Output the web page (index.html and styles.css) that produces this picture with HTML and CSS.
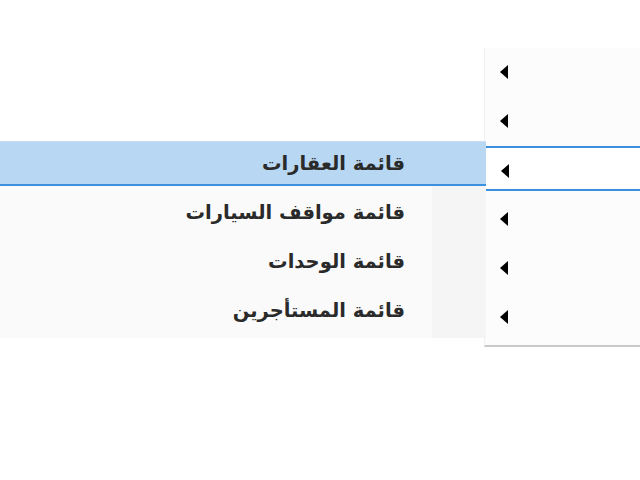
FILE: index.html
```html
<!DOCTYPE html>
<html lang="ar" dir="rtl">
<head>
<meta charset="utf-8">
<link rel="stylesheet" href="styles.css">
</head>
<body>
<div class="menu main-menu">
  <div class="main-item"><span class="arrow"></span></div>
  <div class="main-item"><span class="arrow"></span></div>
  <div class="main-item selected"><span class="arrow"></span></div>
  <div class="main-item"><span class="arrow"></span></div>
  <div class="main-item"><span class="arrow"></span></div>
  <div class="main-item"><span class="arrow"></span></div>
</div>
<div class="menu sub-menu">
  <div class="sub-item active"><span class="label">قائمة العقارات</span></div>
  <div class="sub-item"><span class="label">قائمة مواقف السيارات</span></div>
  <div class="sub-item"><span class="label">قائمة الوحدات</span></div>
  <div class="sub-item"><span class="label">قائمة المستأجرين</span></div>
</div>
</body>
</html>
```

FILE: styles.css
```css
html, body {
  margin: 0;
  padding: 0;
  background: #ffffff;
  width: 640px;
  height: 480px;
  overflow: hidden;
  font-family: "DejaVu Sans", sans-serif;
}

.menu {
  position: absolute;
  box-sizing: border-box;
}

.main-menu {
  left: 484px;
  top: 48px;
  width: 156px;
  height: 299px;
  background: #fcfcfc;
  border-left: 1px solid #f1f1f1;
  border-bottom: 2px solid #c9c9c9;
  display: flex;
  flex-direction: column;
  gap: 4px;
}

.main-item {
  box-sizing: border-box;
  height: 45px;
  display: flex;
  align-items: center;
  justify-content: flex-start;
  direction: ltr;
  padding-left: 15px;
  padding-top: 2px;
}

.main-item.selected {
  background: #ffffff;
  border-top: 2px solid #3d8fe0;
  border-bottom: 2px solid #3d8fe0;
  border-left: 1px solid #3d8fe0;
  margin-left: -1px;
  padding-left: 16px;
  padding-top: 4px;
}

.arrow {
  width: 0;
  height: 0;
  border-top: 7px solid transparent;
  border-bottom: 7px solid transparent;
  border-right: 8px solid #000000;
}

.sub-menu {
  left: 0;
  top: 141px;
  width: 486px;
  height: 197px;
  background: linear-gradient(to left, #f5f5f5 54px, #fafafa 54px);
  display: flex;
  flex-direction: column;
  gap: 4px;
}

.sub-item {
  box-sizing: border-box;
  height: 45px;
  display: flex;
  align-items: center;
  font-size: 19.5px;
  font-weight: bold;
  color: #2a2a2a;
}

.label {
  padding-right: 81px;
  white-space: nowrap;
}

.sub-item.active {
  background: #b8d7f3;
  border-top: 1px solid #c6def4;
  border-bottom: 2px solid #3d8fe0;
}
```
